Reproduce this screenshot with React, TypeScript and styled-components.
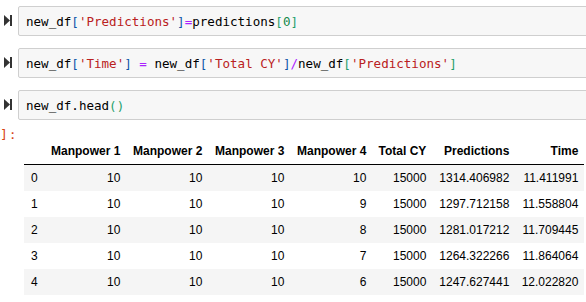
import styled, { createGlobalStyle } from 'styled-components'

const GlobalStyle = createGlobalStyle`
    html, body {
        margin: 0;
        padding: 0;
        background: #fff;
        overflow: hidden;
    }
`

const rows = [
    { idx: 0, m: [10, 10, 10, 10], cy: 15000, pred: '1314.406982', time: '11.411991' },
    { idx: 1, m: [10, 10, 10, 9], cy: 15000, pred: '1297.712158', time: '11.558804' },
    { idx: 2, m: [10, 10, 10, 8], cy: 15000, pred: '1281.017212', time: '11.709445' },
    { idx: 3, m: [10, 10, 10, 7], cy: 15000, pred: '1264.322266', time: '11.864064' },
    { idx: 4, m: [10, 10, 10, 6], cy: 15000, pred: '1247.627441', time: '12.022820' },
]

// column widths (padding included) read off the notebook output
const columns = [
    { label: 'Manpower 1', width: 80 },
    { label: 'Manpower 2', width: 82 },
    { label: 'Manpower 3', width: 82 },
    { label: 'Manpower 4', width: 82 },
    { label: 'Total CY', width: 60 },
    { label: 'Predictions', width: 83 },
    { label: 'Time', width: 69 },
]

const COLORS = {
    text: '#000',
    str: '#ba2121',
    op: '#aa22ff',
    num: '#14884a',
    blue: '#0b55a8',
    green: '#1f9f6c',
}

type TokKind = keyof typeof COLORS

const RunButton = () => (
    <RunIcon viewBox="0 0 8 11" width={8} height={11}>
        <polygon points="0,0 6,5.5 0,11" fill="#333" />
        <rect x={6} y={0} width={2} height={11} fill="#333" />
    </RunIcon>
)

const T = ({ k = 'text', children }: { k?: TokKind, children: string }) => (
    <Tok $c={COLORS[k]}>{children}</Tok>
)

export default function App() {
    return (
        <Page>
            <GlobalStyle />
            <CellRow>
                <RunButton />
                <InputBox>
                    <T>new_df</T><T k="blue">[</T><T k="str">'Predictions'</T><T k="blue">]</T>
                    <T k="op">=</T><T>predictions</T><T k="green">[</T><T k="num">0</T><T k="green">]</T>
                </InputBox>
            </CellRow>
            <CellRow>
                <RunButton />
                <InputBox>
                    <T>new_df</T><T k="blue">[</T><T k="str">'Time'</T><T k="blue">]</T><T> </T>
                    <T k="op">=</T><T> new_df</T><T k="blue">[</T><T k="str">'Total CY'</T><T k="blue">]</T>
                    <T k="op">/</T><T>new_df</T><T k="green">[</T><T k="str">'Predictions'</T><T k="green">]</T>
                </InputBox>
            </CellRow>
            <CellRow>
                <RunButton />
                <InputBox>
                    <T>new_df.head</T><T k="green">()</T>
                </InputBox>
            </CellRow>
            <OutputRow>
                <Prompt>]:</Prompt>
                <DataTable>
                    <thead>
                        <tr>
                            <HeadCell $w={21} />
                            {columns.map((c) => <HeadCell key={c.label} $w={c.width}>{c.label}</HeadCell>)}
                        </tr>
                    </thead>
                    <tbody>
                        {rows.map((r) => (
                            <BodyRow key={r.idx} $striped={r.idx % 2 === 0}>
                                <IndexCell>{r.idx}</IndexCell>
                                {r.m.map((v, i) => <DataCell key={i}>{v}</DataCell>)}
                                <DataCell>{r.cy}</DataCell>
                                <DataCell>{r.pred}</DataCell>
                                <DataCell>{r.time}</DataCell>
                            </BodyRow>
                        ))}
                    </tbody>
                </DataTable>
            </OutputRow>
        </Page>
    )
}

const Page = styled.div`
    width: 586px;
    height: 302px;
    overflow: hidden;
    padding-top: 6px;
    box-sizing: border-box;
    display: flex;
    flex-direction: column;
    gap: 12px;
`

const CellRow = styled.div`
    display: flex;
    align-items: center;
    width: 620px;
`

const RunIcon = styled.svg`
    flex: none;
    margin: 0 6px 0 4px;
    position: relative;
    top: -1px;
`

const InputBox = styled.div`
    flex: 1;
    height: 30px;
    box-sizing: border-box;
    background: #f7f7f7;
    border: 1px solid #cfcfcf;
    border-radius: 2px;
    padding: 0 0 0 7px;
    display: flex;
    align-items: center;
    white-space: pre;
    font-family: "DejaVu Sans Mono", "Liberation Mono", monospace;
    font-size: 12.55px;
`

const Tok = styled.span<{ $c: string }>`
    color: ${(p) => p.$c};
`

const OutputRow = styled.div`
    display: flex;
    align-items: flex-start;
    margin-top: -4px;
`

const Prompt = styled.div`
    width: 24px;
    flex: none;
    font-family: "DejaVu Sans Mono", monospace;
    font-size: 13px;
    line-height: 14px;
    color: #d84315;
    letter-spacing: 1px;
`

const DataTable = styled.table`
    margin-top: 10px;
    border-collapse: collapse;
    border: none;
    table-layout: fixed;
    font-family: "Liberation Sans", Arial, sans-serif;
    font-size: 12px;
    color: #000;
    white-space: nowrap;

    thead {
        border-bottom: 1px solid #000;
    }
`

const HeadCell = styled.th<{ $w: number }>`
    width: ${(p) => p.$w}px;
    box-sizing: border-box;
    text-align: right;
    font-weight: bold;
    padding: 6px;
    line-height: 14px;
`

const BodyRow = styled.tr<{ $striped: boolean }>`
    background: ${(p) => (p.$striped ? '#f5f5f5' : '#fff')};
`

const DataCell = styled.td`
    text-align: right;
    padding: 6px;
    line-height: 14px;
`

const IndexCell = styled.td`
    text-align: left;
    padding: 6px 6px 6px 7px;
    line-height: 14px;
`
